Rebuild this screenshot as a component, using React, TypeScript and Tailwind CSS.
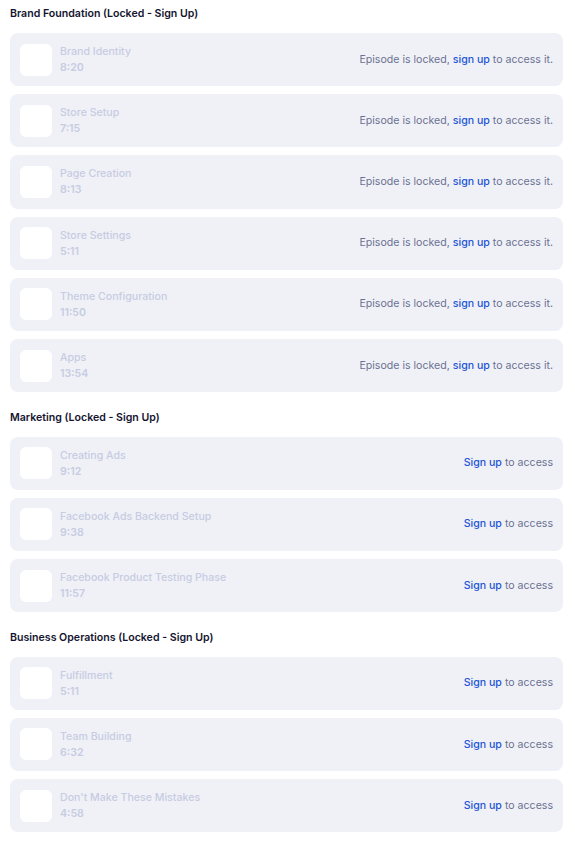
import React from 'react';

type Episode = { title: string; time: string };

const sections: { name: string; long: boolean; episodes: Episode[] }[] = [
  {
    name: 'Brand Foundation (Locked - Sign Up)',
    long: true,
    episodes: [
      { title: 'Brand Identity', time: '8:20' },
      { title: 'Store Setup', time: '7:15' },
      { title: 'Page Creation', time: '8:13' },
      { title: 'Store Settings', time: '5:11' },
      { title: 'Theme Configuration', time: '11:50' },
      { title: 'Apps', time: '13:54' },
    ],
  },
  {
    name: 'Marketing (Locked - Sign Up)',
    long: false,
    episodes: [
      { title: 'Creating Ads', time: '9:12' },
      { title: 'Facebook Ads Backend Setup', time: '9:38' },
      { title: 'Facebook Product Testing Phase', time: '11:57' },
    ],
  },
  {
    name: 'Business Operations (Locked - Sign Up)',
    long: false,
    episodes: [
      { title: 'Fulfillment', time: '5:11' },
      { title: 'Team Building', time: '6:32' },
      { title: "Don't Make These Mistakes", time: '4:58' },
    ],
  },
];

const EpisodeRow = ({ ep, long }: { ep: Episode; long: boolean }) => (
  <div className="flex h-[53.2px] items-center gap-2 rounded-lg bg-[#f0f1f7] px-[10px]">
    <div className="h-8 w-8 shrink-0 rounded-md bg-white" />
    <div className="flex flex-1 flex-col pt-[1px] text-[10.6px] font-medium leading-4 text-[#c7cce2]">
      <span>{ep.title}</span>
      <span className="font-semibold">{ep.time}</span>
    </div>
    <div className="text-[10.6px] text-[#6b7192]">
      {long ? (
        <>
          Episode is locked, <span className="font-medium text-[#2255d6]">sign up</span> to access it.
        </>
      ) : (
        <>
          <span className="font-medium text-[#2255d6]">Sign up</span> to access
        </>
      )}
    </div>
  </div>
);

export default function App() {
  return (
    <div className="min-h-screen bg-white pl-[10px] pr-[12px] pt-[4px] font-['Inter',sans-serif]">
      {sections.map((s, i) => (
        <div key={s.name} className={i > 0 ? 'mt-[15.5px]' : ''}>
          <h2 className="mb-[9px] text-[10.6px] font-semibold leading-5 text-[#141430]">{s.name}</h2>
          <div className="flex flex-col gap-2">
            {s.episodes.map((ep) => (
              <EpisodeRow key={ep.title} ep={ep} long={s.long} />
            ))}
          </div>
        </div>
      ))}
    </div>
  );
}
